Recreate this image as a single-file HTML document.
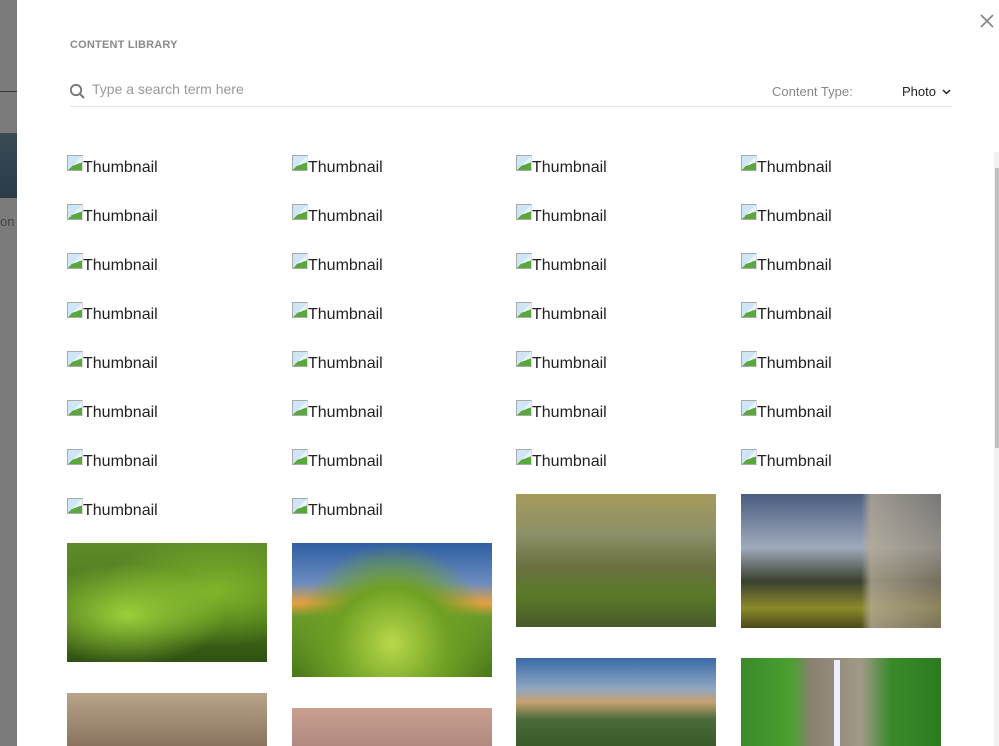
<!DOCTYPE html>
<html><head><style>
*{margin:0;padding:0;box-sizing:border-box}
body{width:999px;height:746px;overflow:hidden;background:#fff;position:relative;font-family:"Liberation Sans",Arial,sans-serif}
.bd{position:absolute;left:0;top:0;width:17px;height:746px;background:#7b7b7b}
.a{position:absolute}
.th{position:absolute;font-size:16px;color:#222;height:20px;line-height:20px;white-space:nowrap}
.th i{display:inline-block;width:16px;height:16px;vertical-align:1px;border:1px solid #aaa;border-right-color:#ddd;background:linear-gradient(135deg,#cfe6f7 0 50%,transparent 50%),linear-gradient(160deg,transparent 60%,#5aa83c 60%);background-color:#e9f3fb}
.img{position:absolute;width:200px}
</style></head><body>
<div class="bd"></div>
<div class="a" style="left:0;top:91px;width:17px;height:1px;background:#333"></div>
<div class="a" style="left:0;top:133px;width:17px;height:65px;background:linear-gradient(#3a4a55,#2a3a48)"></div>
<div class="a" style="left:0;top:214px;font-size:13px;color:#444">on</div>
<div class="a" style="left:17px;top:0;width:982px;height:746px;background:#fff"></div>
<div class="a" style="left:70px;top:39px;font-size:11px;font-weight:bold;color:#8a8a8a;letter-spacing:0.2px">CONTENT LIBRARY</div>
<svg class="a" style="left:69px;top:83px" width="17" height="17" viewBox="0 0 17 17"><circle cx="7" cy="7" r="5.2" fill="none" stroke="#777" stroke-width="1.8"/><line x1="11" y1="11" x2="15" y2="15" stroke="#777" stroke-width="2"/></svg>
<div class="a" style="left:92px;top:81px;font-size:14px;color:#999">Type a search term here</div>
<div class="a" style="left:772px;top:84px;font-size:13px;color:#888">Content Type:</div>
<div class="a" style="left:902px;top:84px;font-size:13px;color:#222">Photo</div>
<svg class="a" style="left:942px;top:89px" width="9" height="6"><polyline points="1,1 4.5,4.5 8,1" fill="none" stroke="#222" stroke-width="1.5"/></svg>
<div class="a" style="left:70px;top:106px;width:882px;height:1px;background:#e6e6e6"></div>
<svg class="a" style="left:980px;top:14px" width="14" height="14"><path d="M1 1L13 13M13 1L1 13" stroke="#888" stroke-width="1.8"/></svg>
<div class="a" style="left:994px;top:152px;width:5px;height:594px;background:#f1f1f1"></div>
<div class="a" style="left:995px;top:168px;width:4px;height:280px;background:#c1c1c1"></div>
<div id="g"></div>
<script>
var xs=[67,292,516,741],h='';
for(var r=0;r<8;r++)for(var c=0;c<4;c++){if(r==7&&c>1)continue;h+='<div class="th" style="left:'+xs[c]+'px;top:'+(155+r*49)+'px"><i></i>Thumbnail</div>';}
document.getElementById('g').innerHTML=h;
</script>
<div class="img" style="left:67px;top:543px;height:119px;background:radial-gradient(ellipse at 30% 60%,#9ccf3a,transparent 50%),radial-gradient(ellipse at 75% 40%,#7fb52a,transparent 55%),linear-gradient(#5e8a2a,#4e7a1c 50%,#2f5212)"></div>
<div class="img" style="left:292px;top:543px;height:134px;background:radial-gradient(ellipse at 50% 75%,#b8d84a,#6fa024 40%,transparent 70%),linear-gradient(#2f5fa0 0,#6b8cc0 30%,#e8a040 45%,#6a9a2a 55%,#4a7a1a 100%)"></div>
<div class="img" style="left:516px;top:494px;height:133px;background:linear-gradient(#a69a5c,#8c9068 30%,#6b7040 55%,#5a7a28 75%,#4a5a2a)"></div>
<div class="img" style="left:741px;top:494px;height:134px;background:linear-gradient(90deg,transparent 60%,rgba(180,170,150,.8) 65%,rgba(140,130,115,.7) 100%),linear-gradient(#4a5c80,#a0aabc 40%,#3a4030 65%,#8a8a2a 85%,#4a4a1a)"></div>
<div class="img" style="left:67px;top:693px;height:53px;background:linear-gradient(#b8a488,#8a7460)"></div>
<div class="img" style="left:292px;top:708px;height:38px;background:linear-gradient(#c9a090,#b08a80)"></div>
<div class="img" style="left:516px;top:658px;height:88px;background:linear-gradient(#3a6aa8,#90a8c0 35%,#c8a070 50%,#4a6a3a 70%,#3a5a2a)"></div>
<div class="img" style="left:741px;top:658px;height:88px;background:linear-gradient(90deg,#3a8a2a 0,#4aa030 25%,#8a8070 35%,#a09a88 60%,#3a8a2a 75%,#2f7a20)"></div>
<div class="a" style="left:834px;top:660px;width:6px;height:86px;background:#eef"></div>
</body></html>
